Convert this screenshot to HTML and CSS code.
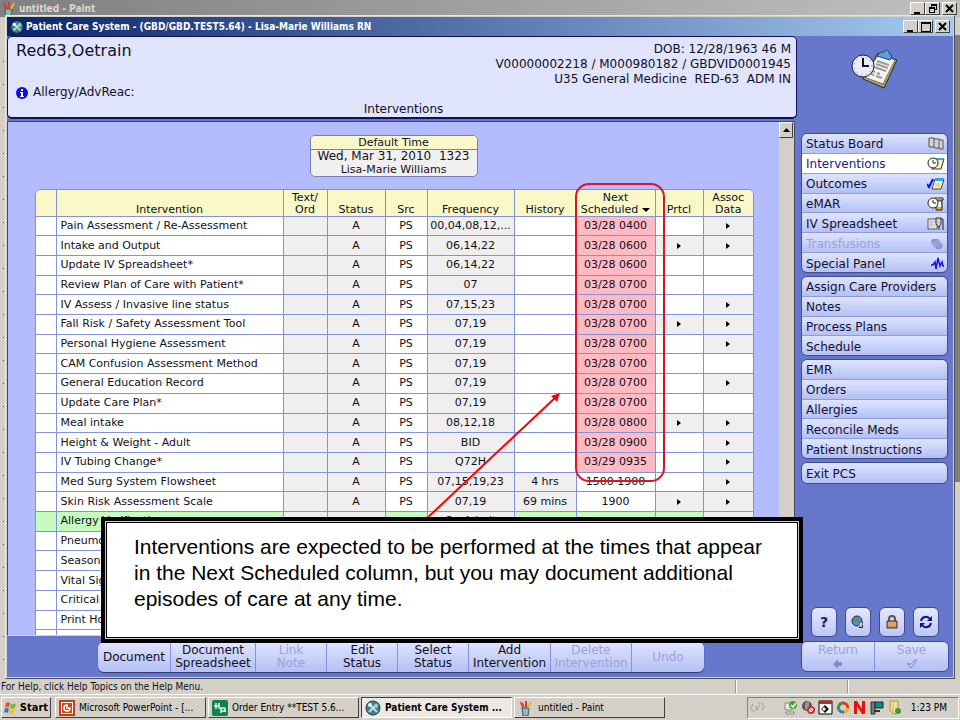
FILE: index.html
```html
<!DOCTYPE html>
<html lang="en">
<head>
    <meta charset="UTF-8">
    <meta name="viewport" content="width=device-width, initial-scale=1.0">
    <title>Patient Care System - Interventions</title>
    <link rel="stylesheet" href="styles.css">
</head>
<body>
    <div class="screen">
        <!-- Paint window in the background -->
        <div class="paint-title">
            <svg class="icon-paint" width="16" height="16" viewBox="0 0 16 16"><path d="M4 8h7l-1 8H5z" fill="#8fb8b8" stroke="#456"/><path d="M5 8L3 2M8 8V1" stroke="#e33" stroke-width="2"/><path d="M10 8l3-6" stroke="#e8b820" stroke-width="2"/><path d="M6 7l-1-4" stroke="#2a9a3a" stroke-width="1"/></svg>
            <span>untitled - Paint</span>
            <div class="win-buttons">
                <button aria-label="Minimize Paint"><svg width="10" height="10" viewBox="0 0 10 10"><path d="M1 8h6v2H1z"/></svg></button>
                <button aria-label="Restore Paint"><svg width="10" height="10" viewBox="0 0 10 10"><path d="M3 0h6v6H7V5h1V2H4v1H3zM1 3h6v6H1zM2 5v3h4V5z" fill-rule="evenodd"/></svg></button>
                <button aria-label="Close Paint"><svg width="10" height="10" viewBox="0 0 10 10"><path d="M1 1l7 7M8 1l-7 7" stroke="#000" stroke-width="2"/></svg></button>
            </div>
        </div>
        <div class="paint-body">
            <div class="paint-tools"></div>
            <div class="paint-edge"></div>
        </div>
        <div class="paint-status">
            <span class="status-help">For Help, click Help Topics on the Help Menu.</span>
            <span class="status-cell"></span>
            <span class="status-cell"></span>
        </div>

        <!-- Taskbar -->
        <div class="taskbar">
            <button class="start-button">
                <svg width="14" height="14" viewBox="0 0 14 14"><path d="M2 2q2-1.500 4 0L5 6.500q-2-1.500-4 0z" fill="#e8502a"/><path d="M7 2.500q2 1.500 5 0L11 7q-3 1.500-5 0z" fill="#7ab92c"/><path d="M1 7.500q2-1.500 4 0L4 12q-2-1.500-4 0z" fill="#3a6fd8"/><path d="M6 8q2 1.500 5 0l-1 4.500q-3 1.500-5 0z" fill="#f5c025"/></svg>
                <span>Start</span>
            </button>
            <button class="task">
                <svg width="16" height="16" viewBox="0 0 16 16"><rect x="1" y="1" width="14" height="14" fill="#fff" stroke="#c43e1c" stroke-width="2"/><rect x="3" y="3" width="10" height="10" fill="#d2491f"/><path d="M8 5a3 3 0 1 0 3 3H8z" fill="none" stroke="#fff" stroke-width="1.500"/></svg>
                <span>Microsoft PowerPoint - [...</span>
            </button>
            <button class="task">
                <svg width="16" height="16" viewBox="0 0 16 16"><rect width="16" height="16" rx="2" fill="#128050"/><path d="M4 3v6M2 6h5V3M7 6v3M9 13V8h4M9 11h5M13 8v4" stroke="#d8ffe8" stroke-width="1.500" fill="none"/></svg>
                <span>Order Entry **TEST 5.6...</span>
            </button>
            <button class="task current">
                <svg width="16" height="16" viewBox="0 0 16 16"><circle cx="8" cy="8" r="7" fill="#3d8585" stroke="#234"/><path d="M4 4l8 8M12 4l-8 8" stroke="#bfe0e8" stroke-width="2"/><circle cx="5" cy="5" r="2" fill="#e8f4ff"/><circle cx="11" cy="6" r="2" fill="#9cc"/></svg>
                <span>Patient Care System ...</span>
            </button>
            <button class="task">
                <svg class="icon-paint" width="16" height="16" viewBox="0 0 16 16"><path d="M4 8h7l-1 8H5z" fill="#8fb8b8" stroke="#456"/><path d="M5 8L3 2M8 8V1" stroke="#e33" stroke-width="2"/><path d="M10 8l3-6" stroke="#e8b820" stroke-width="2"/><path d="M6 7l-1-4" stroke="#2a9a3a" stroke-width="1"/></svg>
                <span>untitled - Paint</span>
            </button>
            <div class="tray">
                <svg class="tray-first" width="15" height="15" viewBox="0 0 15 15" fill="none" stroke="#888"><path d="M3 4l-2 4 2 4M12 3l2 4-2 4" stroke-dasharray="2 1"/><path d="M4 12l6-7M5 6l4 4M8 2l2 2" stroke="#a98"/></svg>
                <svg width="14" height="15" viewBox="0 0 14 15"><path d="M1 3h7v7H1zM2 12h8v2H2z" fill="#e8e8e0" stroke="#8a8a80"/><circle cx="9" cy="5" r="4" fill="#3fa535"/><path d="M7 5l2 2 3-4" stroke="#fff" stroke-width="1.500" fill="none"/></svg>
                <svg width="14" height="15" viewBox="0 0 14 15"><circle cx="6" cy="6" r="5" fill="#555"/><path d="M4 3v6l4 2V1z" fill="#999"/><circle cx="10" cy="10" r="3" fill="#fff" stroke="#c33" stroke-width="2"/><path d="M8 8l4 4" stroke="#c33"/></svg>
                <svg width="15" height="15" viewBox="0 0 15 15"><path d="M1 1h13v13H1z" fill="#fff" stroke="#000"/><path d="M1 1h13v3H1z" fill="#e01818"/><path d="M7 5l4 4-4 4-4-4z" fill="#111"/><path d="M6 7l2 2-2 2-2-2z" fill="#fff"/></svg>
                <svg width="14" height="15" viewBox="0 0 14 15" fill="none" stroke-width="3"><path d="M3 10a5 5 0 0 1 3-7" stroke="#2f9c3c"/><path d="M6 3a5 5 0 0 1 6 5" stroke="#d8392b"/><path d="M12 8a5 5 0 0 1-5 4" stroke="#e3b420"/><path d="M8 12a5 5 0 0 1-5-2" stroke="#3a6fc8"/></svg>
                <svg width="14" height="15" viewBox="0 0 14 15"><path d="M1 14V1h3l5 8V1h3v13H9L4 6v8z" fill="#e81010"/></svg>
                <svg width="15" height="15" viewBox="0 0 15 15"><path d="M1 2h4v12H1z" fill="#777" stroke="#333"/><path d="M5 2h8v6H5z" fill="#0f8c86" stroke="#222"/><path d="M4 10h6v2H4z" fill="#333"/></svg>
                <svg width="14" height="15" viewBox="0 0 14 15"><path d="M2 1h8v12l-4 1-4-3z" fill="#f3e28c" stroke="#a89640"/><path d="M5 1v11" stroke="#c9b85a"/><circle cx="10" cy="11" r="3" fill="#3c9c3a"/></svg>
                <span class="clock">1:23 PM</span>
            </div>
        </div>

        <!-- Patient Care System window -->
        <div class="pcs">
            <div class="pcs-title">
                <svg width="14" height="14" viewBox="0 0 16 16"><circle cx="8" cy="8" r="7" fill="#3d8585" stroke="#234"/><path d="M4 4l8 8M12 4l-8 8" stroke="#bfe0e8" stroke-width="2"/><circle cx="5" cy="5" r="2" fill="#e8f4ff"/><circle cx="11" cy="6" r="2" fill="#9cc"/></svg>
                <span>Patient Care System - (GBD/GBD.TEST5.64) - Lisa-Marie Williams RN</span>
                <div class="win-buttons">
                    <button aria-label="Minimize"><svg width="10" height="10" viewBox="0 0 10 10"><path d="M1 8h6v2H1z"/></svg></button>
                    <button aria-label="Maximize"><svg width="10" height="10" viewBox="0 0 10 10"><path d="M0 0h10v10H0zM1 2v7h8V2z" fill-rule="evenodd"/></svg></button>
                    <button aria-label="Close"><svg width="10" height="10" viewBox="0 0 10 10"><path d="M1 1l7 7M8 1l-7 7" stroke="#000" stroke-width="2"/></svg></button>
                </div>
            </div>

            <div class="pcs-content">
                <div class="main">
                    <div class="patient-header">
                        <div class="patient-top">
                            <h1>Red63,Oetrain</h1>
                            <div class="patient-info">
                                <p>DOB: 12/28/1963 46 M</p>
                                <p>V00000002218 / M000980182 / GBDVID0001945</p>
                                <p>U35 General Medicine&nbsp; RED-63&nbsp; ADM IN</p>
                            </div>
                        </div>
                        <p class="allergy"><svg width="12" height="12" viewBox="0 0 12 12"><circle cx="6" cy="6" r="6" fill="#0a0aee"/><path d="M5 2h2v2H5zM4 5h3v4h1v1H4V9h1V6H4z" fill="#fff"/></svg>Allergy/AdvReac:</p>
                        <h2>Interventions</h2>
                    </div>

                    <div class="work-area">
                        <div class="work-scroll">
                            <div class="default-time">
                                <h3>Default Time</h3>
                                <p class="time">Wed, Mar 31, 2010&nbsp; 1323</p>
                                <p>Lisa-Marie Williams</p>
                            </div>
                            <div class="table-box">
                                <table>
                                    <colgroup>
                                        <col class="c-mark"><col><col class="c-text"><col class="c-status"><col class="c-src"><col class="c-freq"><col class="c-history"><col class="c-next"><col class="c-prtcl"><col class="c-assoc">
                                    </colgroup>
                                    <thead>
                                        <tr>
                                            <th></th>
                                            <th>Intervention</th>
                                            <th>Text/<br>Ord</th>
                                            <th>Status</th>
                                            <th>Src</th>
                                            <th>Frequency</th>
                                            <th>History</th>
                                            <th>Next<br><span class="sorted">Scheduled</span></th>
                                            <th>Prtcl</th>
                                            <th>Assoc<br>Data</th>
                                        </tr>
                                    </thead>
                                    <tbody>
                                        <tr><td></td><td>Pain Assessment / Re-Assessment</td><td></td><td>A</td><td>PS</td><td>00,04,08,12,...</td><td></td><td class="due">03/28 0400</td><td></td><td class="more"></td></tr>
                                        <tr><td></td><td>Intake and Output</td><td></td><td>A</td><td>PS</td><td>06,14,22</td><td></td><td class="due">03/28 0600</td><td class="more"></td><td class="more"></td></tr>
                                        <tr><td></td><td>Update IV Spreadsheet*</td><td></td><td>A</td><td>PS</td><td>06,14,22</td><td></td><td class="due">03/28 0600</td><td></td><td></td></tr>
                                        <tr><td></td><td>Review Plan of Care with Patient*</td><td></td><td>A</td><td>PS</td><td>07</td><td></td><td class="due">03/28 0700</td><td></td><td></td></tr>
                                        <tr><td></td><td>IV Assess / Invasive line status</td><td></td><td>A</td><td>PS</td><td>07,15,23</td><td></td><td class="due">03/28 0700</td><td></td><td class="more"></td></tr>
                                        <tr><td></td><td>Fall Risk / Safety Assessment Tool</td><td></td><td>A</td><td>PS</td><td>07,19</td><td></td><td class="due">03/28 0700</td><td class="more"></td><td class="more"></td></tr>
                                        <tr><td></td><td>Personal Hygiene Assessment</td><td></td><td>A</td><td>PS</td><td>07,19</td><td></td><td class="due">03/28 0700</td><td></td><td class="more"></td></tr>
                                        <tr><td></td><td>CAM Confusion Assessment Method</td><td></td><td>A</td><td>PS</td><td>07,19</td><td></td><td class="due">03/28 0700</td><td></td><td></td></tr>
                                        <tr><td></td><td>General Education Record</td><td></td><td>A</td><td>PS</td><td>07,19</td><td></td><td class="due">03/28 0700</td><td></td><td class="more"></td></tr>
                                        <tr><td></td><td>Update Care Plan*</td><td></td><td>A</td><td>PS</td><td>07,19</td><td></td><td class="due">03/28 0700</td><td></td><td></td></tr>
                                        <tr><td></td><td>Meal intake</td><td></td><td>A</td><td>PS</td><td>08,12,18</td><td></td><td class="due">03/28 0800</td><td class="more"></td><td class="more"></td></tr>
                                        <tr><td></td><td>Height &amp; Weight - Adult</td><td></td><td>A</td><td>PS</td><td>BID</td><td></td><td class="due">03/28 0900</td><td></td><td class="more"></td></tr>
                                        <tr><td></td><td>IV Tubing Change*</td><td></td><td>A</td><td>PS</td><td>Q72H</td><td></td><td class="due">03/29 0935</td><td></td><td class="more"></td></tr>
                                        <tr><td></td><td>Med Surg System Flowsheet</td><td></td><td>A</td><td>PS</td><td>07,15,19,23</td><td class="done">4 hrs</td><td>1500 1900</td><td></td><td class="more"></td></tr>
                                        <tr><td></td><td>Skin Risk Assessment Scale</td><td></td><td>A</td><td>PS</td><td>07,19</td><td class="done">69 mins</td><td>1900</td><td class="more"></td><td class="more"></td></tr>
                                        <tr class="selected"><td></td><td>Allergy Verification</td><td></td><td></td><td></td><td>On Admit</td><td></td><td></td><td></td><td></td></tr>
                                        <tr><td></td><td>Pneumonia</td><td></td><td></td><td></td><td></td><td></td><td></td><td></td><td></td></tr>
                                        <tr><td></td><td>Seasonal</td><td></td><td></td><td></td><td></td><td></td><td></td><td></td><td></td></tr>
                                        <tr><td></td><td>Vital Signs</td><td></td><td></td><td></td><td></td><td></td><td></td><td></td><td></td></tr>
                                        <tr><td></td><td>Critical</td><td></td><td></td><td></td><td></td><td></td><td></td><td></td><td></td></tr>
                                        <tr><td></td><td>Print Home</td><td></td><td></td><td></td><td></td><td></td><td></td><td></td><td></td></tr>
                                        <tr><td></td><td>Discharge</td><td></td><td></td><td></td><td></td><td></td><td></td><td></td><td></td></tr>
                                    </tbody>
                                </table>
                            </div>
                        </div>
                        <div class="scrollbar">
                            <button aria-label="Scroll up"><svg width="7" height="4" viewBox="0 0 7 4"><path d="M0 4l3.500-4L7 4z"/></svg></button>
                        </div>
                    </div>

                    <div class="actions">
                        <button>Document</button>
                        <button>Document<br>Spreadsheet</button>
                        <button disabled>Link<br>Note</button>
                        <button>Edit<br>Status</button>
                        <button>Select<br>Status</button>
                        <button>Add<br>Intervention</button>
                        <button disabled>Delete<br>Intervention</button>
                        <button disabled>Undo</button>
                    </div>
                </div>

                <div class="side">
                    <svg class="side-logo" width="48" height="42" viewBox="0 0 48 42">
                        <path d="M27 4l19 7-13 28-21-9z" fill="#a8a060" stroke="#2a2a30"/>
                        <path d="M28 5l16 6-12 24-19-7z" fill="#f4f4ee" stroke="#777"/>
                        <path d="M27 6q2-4 6-3 2-4 5 0 0 2 3 4l-2 4-13-4z" fill="#5aa0e0" stroke="#245"/>
                        <path d="M26 12l12 4M25 15l12 4M23 18l12 4M21 22l3 1M26 24l3 1M20 25l3 1M25 27l6 2" stroke="#9a9a9a" stroke-width="2"/>
                        <circle cx="12" cy="17" r="11" fill="#e9ecfa" stroke="#223"/>
                        <circle cx="12" cy="17" r="9" fill="none" stroke="#778" stroke-dasharray="1 4"/>
                        <path d="M12 9v8h6" stroke="#112" stroke-width="2" fill="none"/>
                    </svg>
                    <nav>
                        <div class="menu seven">
                            <a href="#">Status Board<svg width="18" height="16" viewBox="0 0 18 16"><path d="M2 2h5l1 1 4 0 1 1h3v9h-3l-1-1H8l-1-1H2z" fill="#d4d4d4" stroke="#555"/><path d="M7 2v9M12 4v9" stroke="#555"/></svg></a>
                            <a href="#" class="active">Interventions<svg width="18" height="16" viewBox="0 0 18 16"><path d="M8 3h9l-3 10H5z" fill="#f6f3b0" stroke="#333"/><path d="M9 2h8l-1 2H9z" fill="#4aa0e8"/><circle cx="6" cy="7" r="5" fill="#fff" stroke="#222"/><path d="M6 4v3h3" stroke="#222" fill="none"/></svg></a>
                            <a href="#">Outcomes<svg width="18" height="16" viewBox="0 0 18 16"><path d="M8 3h9l-3 10H5z" fill="#f6f6c0" stroke="#444"/><path d="M9 2h8l-1 3H8z" fill="#3aa0e8"/><path d="M8 8h5M8 10h5" stroke="#bb9"/><path d="M0 8l2 3 4-8" stroke="#0a0af0" stroke-width="2" fill="none"/></svg></a>
                            <a href="#">eMAR<svg width="18" height="16" viewBox="0 0 18 16"><path d="M9 3h6v11H9z" fill="#f0a020" stroke="#222"/><path d="M11 6h3v5h-3z" fill="#fff"/><path d="M8 2h8v2H8z" fill="#fff" stroke="#222"/><circle cx="6" cy="7" r="5" fill="#fff" stroke="#222"/><path d="M6 4v3h3" stroke="#222" fill="none"/></svg></a>
                            <a href="#">IV Spreadsheet<svg width="18" height="16" viewBox="0 0 18 16"><path d="M1 3h9v10H1z" fill="#e0e4ec" stroke="#555"/><path d="M1 6h9M1 9h9M4 3v10" stroke="#bbb"/><path d="M9 2h5v6l-2 3-3-3z" fill="#c8ccd4" stroke="#333"/><path d="M12 11v3M16 14V3h-2" stroke="#222" stroke-width="1" fill="none"/></svg></a>
                            <a href="#" class="off">Transfusions<svg width="18" height="16" viewBox="0 0 18 16"><path d="M5 3l6 0 5 6-2 4-5 0-5-6z" fill="#8c92cc"/><path d="M7 5l5 6M10 4l4 5M5 6l4 5" stroke="#b9c0ee"/></svg></a>
                            <a href="#">Special Panel<svg width="18" height="16" viewBox="0 0 18 16"><path d="M4 9h2l2-3 1 7 2-11 2 8 2-4 1 4h1" fill="none" stroke="#1414e0" stroke-width="1.500"/></svg></a>
                        </div>
                        <div class="menu four">
                            <a href="#">Assign Care Providers</a>
                            <a href="#">Notes</a>
                            <a href="#">Process Plans</a>
                            <a href="#">Schedule</a>
                        </div>
                        <div class="menu five">
                            <a href="#">EMR</a>
                            <a href="#">Orders</a>
                            <a href="#">Allergies</a>
                            <a href="#">Reconcile Meds</a>
                            <a href="#">Patient Instructions</a>
                        </div>
                        <div class="menu one">
                            <a href="#">Exit PCS</a>
                        </div>
                    </nav>
                    <div class="tools">
                        <button class="help-button">?</button>
                        <button aria-label="Web"><svg width="14" height="14" viewBox="0 0 14 14"><circle cx="6" cy="6" r="5" fill="#5a8ad8" stroke="#226"/><path d="M3 3l4-1 1 3-3 2-3-1zM6 9l3-2 1 3-3 1z" fill="#4c9c44"/><path d="M8 7h4v6H8z" fill="#222"/><path d="M9 12V8h2v2H9l2 2" fill="none" stroke="#fff"/></svg></button>
                        <button aria-label="Lock"><svg width="14" height="14" viewBox="0 0 14 14"><path d="M4 6V4a3 3 0 0 1 6 0v2" fill="none" stroke="#555" stroke-width="2"/><path d="M2 6h10v7H2z" fill="#cf9050" stroke="#4a2c18"/><path d="M3 8h8M3 10h8" stroke="#e8b888"/></svg></button>
                        <button aria-label="Refresh"><svg width="14" height="14" viewBox="0 0 14 14"><path d="M2 6a5 5 0 0 1 9-2M12 8a5 5 0 0 1-9 2" fill="none" stroke="#10108c" stroke-width="2"/><path d="M13 1v5H8zM1 13V8h5z" fill="#10108c"/></svg></button>
                    </div>
                    <div class="finish">
                        <button disabled>Return<svg width="10" height="10" viewBox="0 0 10 10"><path d="M0 5l5-5v3h4v4H5v3z" fill="#8389cc"/></svg></button>
                        <button disabled>Save<svg width="12" height="10" viewBox="0 0 12 10"><path d="M1 5l2-1 1 2 5-5 2 0-6 8z" fill="none" stroke="#8289c8"/></svg></button>
                    </div>
                </div>
            </div>
        </div>

        <!-- Training notes over the screen -->
        <div class="highlight"></div>
        <svg class="pointer" width="140" height="132" viewBox="0 0 140 132"><path d="M2 130L134 6" stroke="#f00" stroke-width="2"/><path d="M138 2l-3 9-6-6z" fill="#f00"/></svg>
        <div class="callout">
            <p>Interventions are expected to be performed at the times that appear in the Next Scheduled column, but you may document additional episodes of care at any time.</p>
        </div>
    </div>
</body>
</html>
```

FILE: styles.css
```css
* {
    box-sizing: border-box;
}

body {
    margin: 0;
    font-family: 'DejaVu Sans', sans-serif;
    font-size: 12px;
    color: #101020;
}

h1, h2, h3, p {
    margin: 0;
    font-weight: normal;
}

button {
    margin: 0;
    padding: 0;
    border: none;
    font: inherit;
    color: inherit;
}

.screen {
    position: relative;
    display: flex;
    flex-direction: column;
    height: 100vh;
    min-height: 720px;
    background-color: #d4d0c8;
    overflow: hidden;
}

/* Paint window */
.paint-title {
    display: flex;
    align-items: center;
    gap: 2px;
    height: 17px;
    padding: 0 3px 0 1px;
    background: linear-gradient(to right, #808080, #c0c0c0);
    color: #dcd8d0;
    font-family: 'DejaVu Sans Condensed', sans-serif;
    font-size: 10px;
    font-weight: bold;
}

.win-buttons {
    display: flex;
    margin-left: auto;
}

.win-buttons button {
    display: flex;
    align-items: center;
    justify-content: center;
    width: 15px;
    height: 13px;
    background-color: #d4d0c8;
    border: 1px solid;
    border-color: #fff #404040 #404040 #fff;
}

.win-buttons button:last-child {
    margin-left: 2px;
}

.paint-body {
    display: flex;
    justify-content: space-between;
    flex: 1;
}

.paint-tools {
    width: 5px;
    margin-top: 22px;
    background: repeating-linear-gradient(to bottom, transparent 0, transparent 22px, #444 22px, #444 23px);
    background-size: 1px 100%;
    background-position: 3px 0;
    background-repeat: no-repeat;
}

.paint-edge {
    width: 6px;
    margin-top: 18px;
    margin-bottom: 196px;
    background-color: #7c7e7c;
}

.paint-status {
    display: flex;
    align-items: center;
    height: 16px;
    padding-left: 1px;
    font-family: 'DejaVu Sans Condensed', sans-serif;
    font-size: 10px;
}

.status-help {
    flex: 1;
}

.status-cell {
    width: 112px;
    height: 13px;
    border-left: 1px solid #fff;
    box-shadow: -1px 0 #999;
}

/* Taskbar */
.taskbar {
    display: flex;
    align-items: center;
    gap: 2px;
    height: 26px;
    padding: 0 1px;
    border-top: 1px solid #fff;
    font-family: 'DejaVu Sans Condensed', sans-serif;
    font-size: 10px;
    color: #000;
}

.start-button,
.task {
    display: flex;
    align-items: center;
    gap: 4px;
    height: 21px;
    padding: 0 3px;
    background-color: #d4d0c8;
    border: 1px solid;
    border-color: #fff #404040 #404040 #fff;
    white-space: nowrap;
}

.start-button {
    gap: 2px;
    width: 50px;
    margin-right: 2px;
    padding: 0 2px;
    font-size: 11px;
    font-weight: bold;
}

.task {
    width: 151px;
}

.task.current {
    background-color: #ece9e4;
    border-color: #404040 #fff #fff #404040;
    font-weight: bold;
}

.tray {
    display: flex;
    align-items: center;
    gap: 3px;
    height: 22px;
    margin-left: auto;
    padding: 0 11px 0 2px;
    border: 1px solid;
    border-color: #808080 #fff #fff #808080;
}

.tray-first {
    margin-right: 16px;
}

.clock {
    margin-left: 6px;
}

/* Patient Care System window */
.pcs {
    position: absolute;
    top: 15px;
    right: 5px;
    bottom: 41px;
    left: 5px;
    display: flex;
    flex-direction: column;
    padding: 1px;
    background-color: #d4d0c8;
    border: 1px solid;
    border-color: #e8e6e0 #505050 #505050 #e8e6e0;
}

.pcs-title {
    display: flex;
    align-items: center;
    gap: 2px;
    height: 19px;
    padding: 0 3px 0 3px;
    background: linear-gradient(to right, #0a246a, #a6caf0);
    color: #fff;
    font-family: 'DejaVu Sans Condensed', sans-serif;
    font-size: 10px;
    font-weight: bold;
}

.pcs-content {
    display: flex;
    flex: 1;
    min-height: 0;
    background-color: #6677cc;
}

.main {
    display: flex;
    flex-direction: column;
    flex: 1;
    min-width: 0;
}

.patient-header {
    height: 83px;
    padding: 5px 5px 0 8px;
    background-color: #e0e4ff;
    border: 1px solid #101060;
    border-bottom-width: 2px;
    border-radius: 5px;
}

.patient-top {
    display: flex;
    justify-content: space-between;
    height: 43px;
}

.patient-header h1 {
    font-size: 16px;
    line-height: 17px;
}

.patient-info {
    text-align: right;
    line-height: 15px;
}

.allergy {
    display: flex;
    align-items: center;
    gap: 5px;
    line-height: 15px;
}

.patient-header h2 {
    font-size: 12px;
    line-height: 18px;
    text-align: center;
}

.work-area {
    display: flex;
    flex: 1;
    min-height: 0;
    margin: 2px 2px 0 0;
    border: 1px solid #404860;
    border-bottom-color: #d4d0c8;
}

.work-scroll {
    flex: 1;
    background-color: #b3bcff;
    overflow: hidden;
}

.default-time {
    width: 168px;
    margin: 13px auto 12px;
    background-color: #f0f0f0;
    border: 1px solid #7880b0;
    border-radius: 5px;
    overflow: hidden;
    text-align: center;
    font-size: 11px;
    line-height: 13px;
}

.default-time h3 {
    padding-top: 1px;
    background-color: #faf8c8;
    border-bottom: 1px solid #7880b0;
    font-size: 11px;
    line-height: 12px;
}

.default-time .time {
    font-size: 12px;
}

.table-box {
    margin: 0 25px 0 27px;
    border: 1px solid #7f8fd8;
    border-radius: 6px 6px 0 0;
    background-color: #fff;
    overflow: hidden;
}

table {
    width: 100%;
    height: 460px;
    table-layout: fixed;
    border-collapse: collapse;
    font-size: 11px;
    line-height: 12px;
}

.c-mark { width: 20px; }
.c-text { width: 44px; }
.c-status { width: 58px; }
.c-src { width: 42px; }
.c-freq { width: 87px; }
.c-history { width: 62px; }
.c-next { width: 79px; }
.c-prtcl { width: 48px; }
.c-assoc { width: 50px; }

th {
    height: 26px;
    padding: 0;
    background-color: #faf8c8;
    border: 1px solid #8492dc;
    border-top: none;
    font-weight: normal;
    vertical-align: bottom;
}

td {
    padding: 0;
    border: 1px solid #8492dc;
    text-align: center;
    white-space: nowrap;
}

tr > :first-child {
    border-left: none;
}

tr > :last-child {
    border-right: none;
}

td:nth-child(2) {
    padding-left: 4px;
    text-align: left;
}

td:nth-child(3),
td:nth-child(4),
td:nth-child(6),
.done,
.more {
    background-color: #efefef;
}

.due {
    background-color: #ffbac2;
}

.more::after {
    content: "";
    display: inline-block;
    border: 3px solid transparent;
    border-left: 4px solid #000;
    border-right: none;
}

.selected td:nth-child(1),
.selected td:nth-child(2),
.selected td:nth-child(5),
.selected td:nth-child(7),
.selected td:nth-child(8),
.selected td:nth-child(9) {
    background-color: #c4fcc0;
}

.selected td:nth-child(10) {
    background-color: #efefef;
}

.sorted::after {
    content: "";
    display: inline-block;
    margin-left: 4px;
    border: 4px solid transparent;
    border-top-color: #000;
    border-bottom: none;
    vertical-align: middle;
}

.scrollbar {
    width: 15px;
    background-color: #d4d0c8;
}

.scrollbar button {
    display: flex;
    align-items: center;
    justify-content: center;
    width: 14px;
    height: 16px;
    background-color: #d4d0c8;
    border: 1px solid;
    border-color: #fff #404040 #404040 #fff;
}

/* Shared look of the button bars */
.actions button,
.finish button {
    background: linear-gradient(to bottom, #dfe4ff, #b4c0f4);
    border-right: 1px solid #8492dc;
}

.actions button:disabled,
.finish button:disabled {
    color: #9aa2dc;
}

.actions {
    display: grid;
    grid-template-columns: 73px 85px 71px 71px 71px 82px 81px 72px;
    height: 30px;
    margin: 6px auto 5px 91px;
    border-radius: 6px;
    overflow: hidden;
    box-shadow: 0 1px 1px #303870;
    line-height: 13px;
}

/* Right column */
.side {
    display: flex;
    flex-direction: column;
    width: 156px;
    padding: 13px 4px 5px 4px;
}

.side-logo {
    align-self: center;
    margin-bottom: 42px;
}

.menu {
    display: flex;
    flex-direction: column;
    width: 147px;
    margin-bottom: 3px;
    border: 1px solid #404c90;
    border-radius: 6px;
    overflow: hidden;
}

.menu.seven { height: 140px; }
.menu.four { height: 80px; }
.menu.five { height: 100px; }
.menu.one { height: 22px; }

.menu a {
    display: flex;
    flex: 1;
    align-items: center;
    justify-content: space-between;
    padding: 2px 2px 0 4px;
    background: linear-gradient(to bottom, #dfe4ff, #b4c0f4);
    border-bottom: 1px solid #8c9ce0;
    color: #101030;
    text-decoration: none;
    white-space: nowrap;
}

.menu a:last-child {
    border-bottom: none;
}

.menu a.active {
    background: #fff;
    color: #202078;
}

.menu a.off {
    color: #9aa2dc;
}

.tools {
    display: flex;
    gap: 8px;
    margin-top: auto;
    padding-left: 10px;
}

.tools button {
    display: flex;
    align-items: center;
    justify-content: center;
    width: 26px;
    height: 30px;
    background: linear-gradient(to bottom, #e4e8ff, #bcc6f8);
    border: 1px solid #404c90;
    border-radius: 6px;
}

.tools .help-button {
    font-size: 14px;
    font-weight: bold;
    color: #10108c;
}

.finish {
    display: grid;
    grid-template-columns: 1fr 1fr;
    height: 31px;
    margin-top: 4px;
    border: 1px solid #404c90;
    border-radius: 6px;
    overflow: hidden;
}

.finish button {
    display: flex;
    flex-direction: column;
    align-items: center;
    gap: 1px;
    line-height: 16px;
}

.actions button:last-child,
.finish button:last-child {
    border-right: none;
}

/* Training notes */
.highlight {
    position: absolute;
    top: 183px;
    right: 295px;
    width: 90px;
    height: 299px;
    border: 2px solid #dc1428;
    border-radius: 14px;
}

.pointer {
    position: absolute;
    top: 391px;
    right: 398px;
}

.callout {
    position: absolute;
    top: 517px;
    right: 157px;
    left: 101px;
    padding: 13px 25px 27px 29px;
    background-color: #fff;
    border: 4px solid #000;
    box-shadow: inset 0 0 0 1px #ccc, inset 0 0 0 2px #000;
    color: #000;
    font-family: 'Liberation Sans', sans-serif;
    font-size: 21px;
    line-height: 26px;
}
```
